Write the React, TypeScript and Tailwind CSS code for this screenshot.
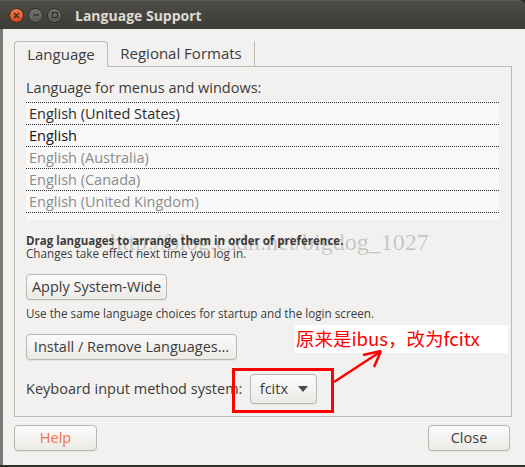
import { ReactNode } from "react"

const FONT = "font-['Open_Sans','DejaVu_Sans',sans-serif]"

function Btn({ children, className = "" }: { children: ReactNode; className?: string }) {
  return (
    <div
      className={`flex items-center justify-center rounded-[4px] border border-[#b8b6b1] bg-gradient-to-b from-[#fbfbfa] to-[#eceae7] text-[14.5px] text-[#3c3c3c] shadow-[0_1px_0_rgba(0,0,0,0.06)] ${className}`}
    >
      {children}
    </div>
  )
}

function TitleButton({ kind }: { kind: "close" | "min" | "max" }) {
  if (kind === "close") {
    return (
      <div className="flex h-[15px] w-[15px] items-center justify-center rounded-full border border-[#3a2a22] bg-gradient-to-b from-[#f7794b] to-[#d8461a]">
        <svg width="7" height="7" viewBox="0 0 7 7">
          <path d="M1 1 L6 6 M6 1 L1 6" stroke="#3b2a22" strokeWidth="1.4" />
        </svg>
      </div>
    )
  }
  return (
    <div className="flex h-[15px] w-[15px] items-center justify-center rounded-full border border-[#2e2d2a] bg-gradient-to-b from-[#75746f] to-[#5a5955]">
      <svg width="8" height="8" viewBox="0 0 8 8">
        {kind === "min" ? (
          <path d="M1 4 H7" stroke="#2f2e2b" strokeWidth="1.3" />
        ) : (
          <rect x="1.5" y="1.5" width="5" height="5" fill="none" stroke="#2f2e2b" strokeWidth="1.2" />
        )}
      </svg>
    </div>
  )
}

const languages = [
  { name: "English (United States)", tone: "text-[#2c2c2c]" },
  { name: "English", tone: "text-[#141414]" },
  { name: "English (Australia)", tone: "text-[#8c8c8c]" },
  { name: "English (Canada)", tone: "text-[#8c8c8c]" },
  { name: "English (United Kingdom)", tone: "text-[#8c8c8c]" },
]

export default function App() {
  return (
    <div className={`relative h-[467px] w-[525px] overflow-hidden bg-[#2f2e2b] ${FONT}`}>
      {/* title bar */}
      <div className="flex h-[29px] items-center rounded-tr-[6px] border-t border-[#5a5954] bg-gradient-to-b from-[#4d4c47] to-[#3d3c38] pl-[9px]">
        <div className="flex gap-[4px]">
          <TitleButton kind="close" />
          <TitleButton kind="min" />
          <TitleButton kind="max" />
        </div>
        <span className="ml-[13px] text-[14px] font-bold text-[#dfdbd2]">Language Support</span>
      </div>

      {/* body */}
      <div className="flex h-[436px] flex-col border-l-[3px] border-[#7b7a76] bg-[#f2f1f0] pl-[11px] pr-[13px] pt-[12px] text-[#3c3c3c]">
        {/* tabs */}
        <div className="flex h-[26px] items-stretch">
          <div className="flex w-[94px] items-center justify-center rounded-t-[4px] border border-b-0 border-[#bdbab5] text-[15px] text-[#3c3c3c]">
            Language
          </div>
          <div className="flex w-[147px] items-center justify-center border-b border-r border-[#bdbab5] text-[15px] text-[#3c3c3c]">
            Regional Formats
          </div>
          <div className="flex-1 border-b border-[#bdbab5]" />
        </div>

        {/* frame */}
        <div className="flex h-[350px] flex-col border border-t-0 border-[#bdbab5] px-[11px] pt-[11px]">
          <div className="h-[20px] text-[14.5px] leading-[20px]">Language for menus and windows:</div>

          <div className="mt-[3px] flex h-[119px] w-[473px] flex-col bg-[#f8f8f8] pt-[1px]">
            {languages.map((l) => (
              <div
                key={l.name}
                className={`h-[22px] border-t border-dotted border-[#2e2e2e] pl-[3px] text-[14.5px] leading-[21px] ${l.tone}`}
              >
                {l.name}
              </div>
            ))}
            <div className="border-t border-dotted border-[#2e2e2e]" />
          </div>

          <div className="mt-[14px] text-[11.7px] leading-[13px]">
            <div className="font-bold text-[11.5px]">Drag languages to arrange them in order of preference.</div>
            <div>Changes take effect next time you log in.</div>
          </div>

          <Btn className="mt-[14px] h-[26px] w-[141px]">Apply System-Wide</Btn>

          <div className="mt-[6px] text-[11.7px] leading-[14px]">
            Use the same language choices for startup and the login screen.
          </div>

          <Btn className="mt-[14px] h-[26px] w-[211px]">Install / Remove Languages...</Btn>

          <div className="mt-[14px] flex items-center gap-[8px]">
            <span className="text-[14.5px]">Keyboard input method system:</span>
            <Btn className="h-[30px] w-[67px] gap-[10px]">
              <span>fcitx</span>
              <svg width="10" height="6" viewBox="0 0 10 6">
                <path d="M0 0 H10 L5 6 Z" fill="#4a4a4a" />
              </svg>
            </Btn>
          </div>
        </div>

        {/* bottom buttons */}
        <div className="mt-[8px] flex justify-between">
          <Btn className="h-[26px] w-[83px]">
            <span className="text-[#ee7447]">Help</span>
          </Btn>
          <Btn className="mr-[2px] h-[26px] w-[82px]">Close</Btn>
        </div>
      </div>

      {/* watermark */}
      <div className="pointer-events-none absolute left-[110px] top-[224px] font-['Liberation_Serif',serif] text-[24px] text-[#3c3c3c]/25">
        http://blog.csdn.net/bigdog_1027
      </div>

      {/* annotation */}
      <div className="absolute left-[295px] top-[325px] flex h-[28px] w-[213px] items-center bg-white pl-[1px] font-['Noto_Sans_CJK_SC',sans-serif] text-[18.5px] text-[#ff0000]">
        原来是ibus，改为fcitx
      </div>
      <div className="pointer-events-none absolute left-[232px] top-[368px] h-[45px] w-[102px] border-[3px] border-[#ff0000]" />
      <svg className="pointer-events-none absolute left-0 top-0" width="525" height="467">
        <path d="M334 382 L380 352" stroke="#ff0000" strokeWidth="2.5" fill="none" />
        <path d="M363 355 L381 351" stroke="#ff0000" strokeWidth="2.5" fill="none" />
        <path d="M381 351 L374 367" stroke="#ff0000" strokeWidth="2.5" fill="none" />
      </svg>
    </div>
  )
}
